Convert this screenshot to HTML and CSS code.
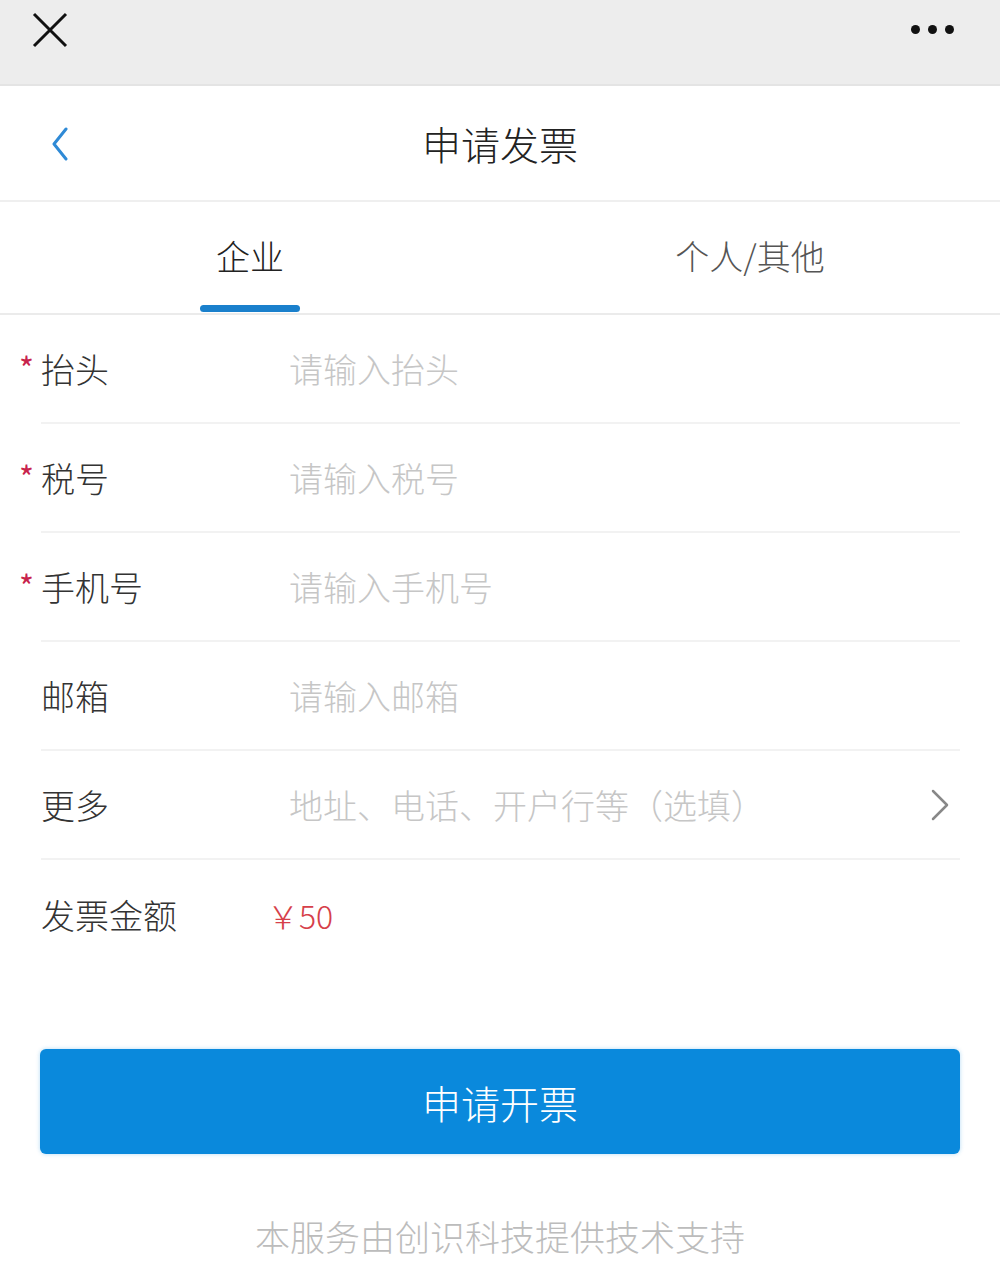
FILE: index.html
```html
<!DOCTYPE html>
<html lang="zh-CN">
<head>
  <meta charset="UTF-8">
  <meta name="viewport" content="width=device-width, initial-scale=1.0">
  <title>申请发票</title>
  <link rel="stylesheet" href="styles.css">
</head>
<body>
  <div class="topbar">
    <svg class="close-icon" width="38" height="38" viewBox="0 0 38 38">
      <path d="M3 3 L35 35 M35 3 L3 35" stroke="#111" stroke-width="3" fill="none"/>
    </svg>
    <div class="more-dots"><span></span><span></span><span></span></div>
  </div>

  <div class="navbar">
    <svg class="back-icon" width="20" height="34" viewBox="0 0 20 34">
      <path d="M16 2 L4 17 L16 32" stroke="#2f8ad6" stroke-width="3" fill="none" stroke-linecap="round" stroke-linejoin="round"/>
    </svg>
    <h1 class="title">申请发票</h1>
  </div>

  <div class="tabs">
    <div class="tab active">企业</div>
    <div class="tab">个人/其他</div>
  </div>

  <div class="form">
    <div class="form-row">
      <div class="label required">抬头</div>
      <div class="placeholder">请输入抬头</div>
    </div>
    <div class="form-row">
      <div class="label required">税号</div>
      <div class="placeholder">请输入税号</div>
    </div>
    <div class="form-row">
      <div class="label required">手机号</div>
      <div class="placeholder">请输入手机号</div>
    </div>
    <div class="form-row">
      <div class="label">邮箱</div>
      <div class="placeholder">请输入邮箱</div>
    </div>
    <div class="form-row">
      <div class="label">更多</div>
      <div class="placeholder">地址、电话、开户行等（选填）</div>
      <svg class="arrow-icon" width="20" height="32" viewBox="0 0 20 32">
        <path d="M3 2 L17 16 L3 30" stroke="#888" stroke-width="2.5" fill="none" stroke-linecap="round" stroke-linejoin="round"/>
      </svg>
    </div>
    <div class="form-row last">
      <div class="label">发票金额</div>
      <div class="amount">￥50</div>
    </div>
  </div>

  <button class="submit-btn">申请开票</button>

  <div class="footer">本服务由创识科技提供技术支持</div>
</body>
</html>
```

FILE: styles.css
```css
* {
  margin: 0;
  padding: 0;
  box-sizing: border-box;
  font-family: 'Noto Sans CJK SC', 'Noto Sans', sans-serif;
  font-weight: 300;
}

body {
  width: 1000px;
  background: #fff;
  color: #333;
}

.topbar {
  height: 86px;
  background: #ededed;
  display: flex;
  justify-content: space-between;
  align-items: flex-start;
  padding: 11px 46px 0 31px;
  border-bottom: 2px solid #e4e4e4;
}

.more-dots {
  display: flex;
  gap: 8px;
  margin-top: 14px;
}

.more-dots span {
  width: 9px;
  height: 9px;
  border-radius: 50%;
  background: #111;
}

.navbar {
  height: 116px;
  display: flex;
  align-items: center;
  justify-content: center;
  position: relative;
  border-bottom: 2px solid #efefef;
}

.back-icon {
  position: absolute;
  left: 50px;
  top: 41px;
}

.title {
  font-size: 39px;
  color: #222;
}

.tabs {
  height: 113px;
  display: flex;
  border-bottom: 2px solid #ebebeb;
}

.tab {
  flex: 1;
  display: flex;
  justify-content: center;
  align-items: center;
  font-size: 34px;
  color: #555;
  position: relative;
  padding-bottom: 4px;
}

.tab.active {
  color: #222;
}

.tab.active::after {
  content: '';
  position: absolute;
  bottom: 1px;
  left: 50%;
  width: 100px;
  margin-left: -50px;
  height: 7px;
  border-radius: 4px;
  background: #1a80cc;
}

.form {
  margin: 0 40px 0 41px;
}

.form-row {
  height: 109px;
  display: flex;
  align-items: center;
  border-bottom: 2px solid #f2f2f2;
}

.form-row.last {
  border-bottom: none;
}

.label {
  width: 248px;
  font-size: 34px;
  color: #333;
  position: relative;
}

.label.required::before {
  content: '*';
  position: absolute;
  left: -22px;
  top: 0;
  color: #c8234c;
  font-size: 32px;
  font-weight: 400;
}

.placeholder {
  flex: 1;
  font-size: 34px;
  color: #c6c6c6;
}

.arrow-icon {
  margin-right: 10px;
}

.amount {
  font-size: 32px;
  color: #d6404a;
  margin-left: -22px;
}

.submit-btn {
  display: block;
  width: 920px;
  height: 105px;
  margin: 80px 0 0 40px;
  background: #0a89dc;
  border: none;
  border-radius: 6px;
  color: #fff;
  font-size: 39px;
  box-shadow: 0 0 4px rgba(10, 137, 220, 0.3);
}

.footer {
  margin-top: 56px;
  text-align: center;
  font-size: 35px;
  color: #bcbcbc;
}
```
